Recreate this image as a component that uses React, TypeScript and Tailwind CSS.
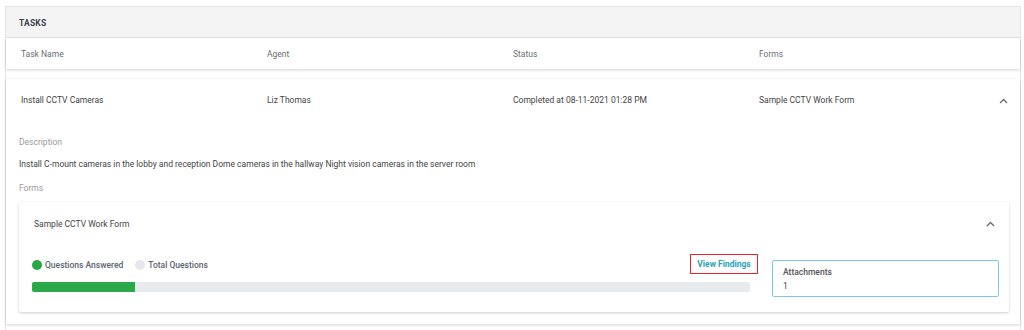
import React from "react";

const Chevron = () => (
  <svg width="9" height="6" viewBox="0 0 9 6" fill="none">
    <polyline points="1,5 4.5,1.5 8,5" stroke="#6b6b6b" strokeWidth="1.3" />
  </svg>
);

export default function App() {
  return (
    <div
      className="w-[1024px] h-[330px] bg-white pl-[5px] pr-[3px] pt-[6px]"
      style={{ fontFamily: "Roboto, 'Noto Sans', sans-serif" }}
    >
      <div className="border border-[#e4e4e4] bg-white h-[330px]">
        <div className="h-[31px] bg-[#f4f4f4] flex items-center pl-[13px] pt-[2px] border-b border-[#e6e6e6]">
          <span className="text-[8.5px] font-bold text-[#3d4550] tracking-[0.2px]">TASKS</span>
        </div>
        <div className="h-[31px] bg-white grid grid-cols-[246px_246px_246px_1fr] items-center pl-[15px] pt-[1px] text-[8.5px] text-[#6b6f75] shadow-[0_1px_3px_rgba(0,0,0,0.18)] relative">
          <span>Task Name</span>
          <span>Agent</span>
          <span>Status</span>
          <span>Forms</span>
        </div>
        <div className="mt-[10px] bg-white shadow-[0_1px_3px_rgba(0,0,0,0.18)] pb-[12px]">
          <div className="h-[42px] grid grid-cols-[246px_246px_246px_1fr] items-center pl-[15px] pt-[1px] text-[8.5px] text-[#444]">
            <span>Install CCTV Cameras</span>
            <span>Liz Thomas</span>
            <span>Completed at 08-11-2021 01:28 PM</span>
            <div className="flex items-center justify-between pr-[12px]">
              <span>Sample CCTV Work Form</span>
              <Chevron />
            </div>
          </div>
          <div className="pl-[13px] pr-[12px]">
            <div className="h-[14px] mt-[14px] flex items-center text-[8.5px] text-[#9a9a9a]">Description</div>
            <div className="h-[14px] mt-[8px] flex items-center text-[8.5px] text-[#444]">
              Install C-mount cameras in the lobby and reception Dome cameras in the hallway Night vision cameras in the server room
            </div>
            <div className="h-[14px] mt-[10px] flex items-center text-[8.5px] text-[#9a9a9a]">Forms</div>
            <div className="mt-[7px] w-[990px] bg-white shadow-[0_1px_3px_rgba(0,0,0,0.2)] rounded-[2px]">
              <div className="h-[44px] flex items-center justify-between pl-[15px] pr-[14px] text-[8.5px] text-[#444]">
                <span>Sample CCTV Work Form</span>
                <Chevron />
              </div>
              <div className="flex items-start pl-[13px]">
                <div className="w-[726px] pt-[8px] pb-[20px]">
                  <div className="h-[20px] flex items-center justify-between">
                    <div className="flex items-center mt-[3px] text-[8.5px] font-medium text-[#5a6470]">
                      <span className="w-[10px] h-[10px] rounded-full bg-[#28a745] mb-[2px]" />
                      <span className="ml-[3px]">Questions Answered</span>
                      <span className="ml-[12px] w-[10px] h-[10px] rounded-full bg-[#e4e7eb] mb-[2px]" />
                      <span className="ml-[3px]">Total Questions</span>
                    </div>
                    <div className="h-[20px] w-[68px] border-[1.5px] border-[#e8232b] flex items-center justify-center text-[8.5px] font-bold text-[#2aa3b8]">
                      View Findings
                    </div>
                  </div>
                  <div className="mt-[8px] w-[718px] h-[10px] rounded-[2px] bg-[#e8ebee] overflow-hidden">
                    <div className="h-full w-[103px] bg-[#2ba84a]" />
                  </div>
                </div>
                <div className="ml-[14px] mt-[14px] mb-[15px] w-[227px] h-[37px] border border-[#79c8ea] rounded-[2px] pl-[10px] pt-[5px] text-[8.5px] text-[#444]">
                  <div className="leading-[12px] font-medium text-[#555]">Attachments</div>
                  <div className="leading-[12px] mt-[2px]">1</div>
                </div>
              </div>
            </div>
          </div>
        </div>
      </div>
    </div>
  );
}
